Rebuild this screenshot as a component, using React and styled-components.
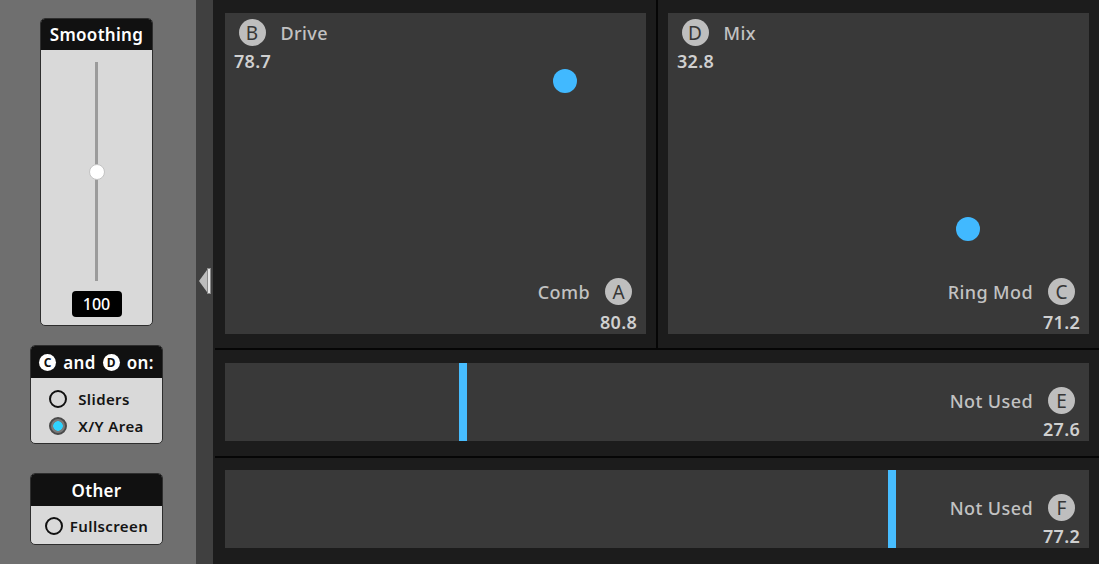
import React from 'react';
import styled, { createGlobalStyle } from 'styled-components';

const GlobalStyle = createGlobalStyle`
  html, body {
    margin: 0;
    padding: 0;
    height: 100%;
    overflow: hidden;
    background: #1c1c1c;
  }
  body {
    font-family: "Noto Sans", "Open Sans", sans-serif;
  }
  #root {
    height: 100%;
  }
`;

const Layout = styled.div`
  display: flex;
  height: 564px;
`;

const Sidebar = styled.aside`
  width: 196px;
  flex-shrink: 0;
  box-sizing: border-box;
  padding-right: 3px;
  background: #6f6f6f;
  display: flex;
  flex-direction: column;
  align-items: center;
`;

const Card = styled.section`
  width: ${p => p.$width}px;
  margin-top: ${p => p.$top}px;
  box-sizing: border-box;
  border: 1px solid #2e2e2e;
  border-radius: 5px;
  overflow: hidden;
  background: #d9d9d9;
`;

const CardHeader = styled.header`
  height: ${p => p.$height || 31}px;
  background: #111;
  color: #fff;
  font-size: 17px;
  font-weight: 600;
  letter-spacing: 0.3px;
  display: flex;
  align-items: center;
  justify-content: center;
  gap: 7px;
`;

const HeaderBadge = styled.span`
  width: 17px;
  height: 17px;
  border-radius: 50%;
  background: #fff;
  color: #111;
  font-size: 12px;
  font-weight: 700;
  display: inline-flex;
  align-items: center;
  justify-content: center;
`;

const SliderBody = styled.div`
  display: flex;
  flex-direction: column;
  align-items: center;
  padding: 12px 0 8px;
`;

const TrackArea = styled.div`
  position: relative;
  width: 20px;
  height: 219px;
  display: flex;
  justify-content: center;
`;

const Track = styled.div`
  width: 3px;
  height: 100%;
  background: #9b9b9b;
`;

const Thumb = styled.div`
  position: absolute;
  left: 50%;
  width: 16px;
  height: 16px;
  box-sizing: border-box;
  border-radius: 50%;
  background: #fff;
  border: 1px solid #c4c4c4;
  transform: translate(-50%, -50%);
`;

const ValueBox = styled.div`
  margin-top: 10px;
  width: 50px;
  height: 26px;
  border-radius: 4px;
  background: #000;
  color: #fff;
  font-size: 16px;
  font-weight: 500;
  display: flex;
  align-items: center;
  justify-content: center;
`;

const RadioBody = styled.div`
  display: flex;
  justify-content: center;
  padding: ${p => p.$padding};
`;

const RadioList = styled.div`
  display: flex;
  flex-direction: column;
`;

const RadioRow = styled.label`
  height: 27px;
  display: flex;
  align-items: center;
  gap: ${p => p.$gap}px;
  color: #141414;
  font-size: 15px;
  font-weight: 600;
  letter-spacing: 0.4px;
`;

const RadioCircle = styled.span`
  width: 18px;
  height: 18px;
  box-sizing: border-box;
  border-radius: 50%;
  border: 2px solid ${p => (p.$checked ? '#4a4a4a' : '#111')};
  background: ${p => (p.$checked ? 'radial-gradient(circle, #2fd3ff 0 4.5px, #7a7a7a 5px)' : 'transparent')};
  flex-shrink: 0;
`;

const Strip = styled.div`
  width: 17px;
  flex-shrink: 0;
  background: #404040;
  display: flex;
  align-items: center;
  justify-content: center;
`;

const Main = styled.main`
  flex: 1;
  padding-left: 2px;
  background: #1c1c1c;
`;

const Grid = styled.div`
  height: 100%;
  display: grid;
  grid-template-columns: 441px 441px;
  grid-template-rows: 348px 106px 106px;
  gap: 2px;
  background: #060606;
`;

const Cell = styled.div`
  background: #1c1c1c;
  box-sizing: border-box;
  padding: ${p => p.$padding};
  grid-column: ${p => (p.$wide ? '1 / -1' : 'auto')};
`;

const Pad = styled.div`
  position: relative;
  height: 100%;
  box-sizing: border-box;
  padding: 6px 9px 2.5px 9px;
  background: #393939;
  display: flex;
  flex-direction: column;
  justify-content: ${p => (p.$bottomOnly ? 'flex-end' : 'space-between')};
`;

const Corner = styled.div`
  display: flex;
  flex-direction: column;
  align-items: ${p => (p.$end ? 'flex-end' : 'flex-start')};
  gap: ${p => p.$gap}px;
`;

const LabelRow = styled.div`
  display: flex;
  align-items: center;
  gap: 15px;
  margin: ${p => (p.$end ? '0 5px 0 0' : '0 0 0 4.5px')};
`;

const Badge = styled.span`
  width: 27px;
  height: 27px;
  border-radius: 50%;
  background: #bebebe;
  color: #363636;
  font-size: 19px;
  font-weight: 400;
  display: inline-flex;
  align-items: center;
  justify-content: center;
`;

const Name = styled.span`
  color: #c2c2c2;
  font-size: 18px;
  font-weight: 500;
  letter-spacing: 0.4px;
`;

const Value = styled.span`
  color: #d0d0d0;
  font-size: 18px;
  font-weight: 600;
  line-height: 20px;
  letter-spacing: 0.3px;
`;

const Dot = styled.div`
  position: absolute;
  width: 24px;
  height: 24px;
  border-radius: 50%;
  background: #41b9ff;
  transform: translate(-50%, -50%);
`;

const Bar = styled.div`
  position: absolute;
  top: 0;
  bottom: 0;
  width: 8px;
  background: #47bdff;
  transform: translateX(-50%);
`;

const xyAreas = [
  { x: { badge: 'A', name: 'Comb', value: 80.8 }, y: { badge: 'B', name: 'Drive', value: 78.7 } },
  { x: { badge: 'C', name: 'Ring Mod', value: 71.2 }, y: { badge: 'D', name: 'Mix', value: 32.8 } },
];

const sliders = [
  { badge: 'E', name: 'Not Used', value: 27.6, padding: '13px 10px 15px' },
  { badge: 'F', name: 'Not Used', value: 77.2, padding: '12px 10px 16px' },
];

function CollapseArrow() {
  return (
    <svg width="13" height="28" viewBox="0 0 13 28">
      <polygon points="1,13 9,2 9,24" fill="#bdbdbd" />
      <rect x="9" y="0" width="4" height="26" fill="#8a8a8a" />
      <rect x="10" y="1" width="2" height="24" fill="#e6e6e6" />
    </svg>
  );
}

function BottomLabel({ param, gap }) {
  return (
    <Corner $end $gap={gap}>
      <LabelRow $end>
        <Name>{param.name}</Name>
        <Badge>{param.badge}</Badge>
      </LabelRow>
      <Value>{param.value.toFixed(1)}</Value>
    </Corner>
  );
}

function XYArea({ x, y }) {
  return (
    <Pad>
      <Corner $gap={5}>
        <LabelRow>
          <Badge>{y.badge}</Badge>
          <Name>{y.name}</Name>
        </LabelRow>
        <Value>{y.value.toFixed(1)}</Value>
      </Corner>
      <BottomLabel param={x} gap={6.5} />
      <Dot style={{ left: `${x.value}%`, top: `${100 - y.value}%` }} />
    </Pad>
  );
}

function HSlider({ param }) {
  return (
    <Pad $bottomOnly>
      <BottomLabel param={param} gap={4.5} />
      <Bar style={{ left: `${param.value}%` }} />
    </Pad>
  );
}

export default function App() {
  return (
    <Layout>
      <GlobalStyle />
      <Sidebar>
        <Card $width={113} $top={18}>
          <CardHeader>Smoothing</CardHeader>
          <SliderBody>
            <TrackArea>
              <Track />
              <Thumb style={{ top: '50%' }} />
            </TrackArea>
            <ValueBox>100</ValueBox>
          </SliderBody>
        </Card>

        <Card $width={133} $top={19}>
          <CardHeader $height={32}>
            <HeaderBadge>C</HeaderBadge>
            and
            <HeaderBadge>D</HeaderBadge>
            on:
          </CardHeader>
          <RadioBody $padding="7px 0 4px">
            <RadioList>
              <RadioRow $gap={11}>
                <RadioCircle />
                Sliders
              </RadioRow>
              <RadioRow $gap={11}>
                <RadioCircle $checked />
                X/Y Area
              </RadioRow>
            </RadioList>
          </RadioBody>
        </Card>

        <Card $width={133} $top={29}>
          <CardHeader $height={32}>Other</CardHeader>
          <RadioBody $padding="6px 0 5px">
            <RadioRow $gap={7}>
              <RadioCircle />
              Fullscreen
            </RadioRow>
          </RadioBody>
        </Card>
      </Sidebar>

      <Strip>
        <CollapseArrow />
      </Strip>

      <Main>
        <Grid>
          {xyAreas.map(area => (
            <Cell key={area.x.badge} $padding="13px 10px 14px">
              <XYArea x={area.x} y={area.y} />
            </Cell>
          ))}
          {sliders.map(s => (
            <Cell key={s.badge} $wide $padding={s.padding}>
              <HSlider param={s} />
            </Cell>
          ))}
        </Grid>
      </Main>
    </Layout>
  );
}
